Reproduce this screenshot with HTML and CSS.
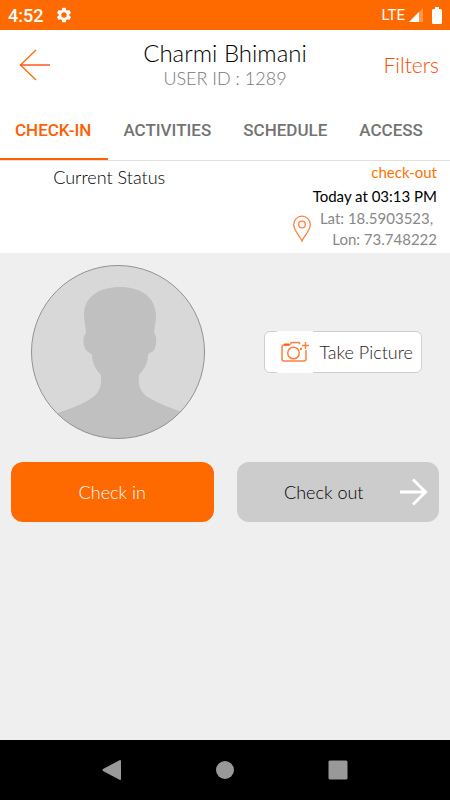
FILE: index.html
```html
<!DOCTYPE html>
<html lang="en">
<head>
<meta charset="utf-8">
<meta name="viewport" content="width=device-width, initial-scale=1">
<title>Check-in</title>
<link rel="stylesheet" href="styles.css">
</head>
<body>
<div class="status-bar">
  <span class="clock">4:52</span>
  <svg class="gear" width="18" height="18" viewBox="0 0 24 24" aria-hidden="true"><path fill="#fff" d="M19.14 12.94c.04-.3.06-.61.06-.94s-.02-.64-.07-.94l2.03-1.58a.49.49 0 0 0 .12-.61l-1.92-3.32a.49.49 0 0 0-.59-.22l-2.39.96a7 7 0 0 0-1.62-.94l-.36-2.54a.48.48 0 0 0-.48-.41h-3.84a.47.47 0 0 0-.47.41l-.36 2.54c-.59.24-1.13.57-1.62.94l-2.39-.96a.48.48 0 0 0-.59.22L2.740 8.870a.47.47 0 0 0 .12.61l2.030 1.580a7 7 0 0 0 0 1.880l-2.030 1.580a.49.49 0 0 0-.12.61l1.920 3.320c.12.22.37.29.59.22l2.390-.96c.5.38 1.030.7 1.620.94l.36 2.540c.05.24.24.41.48.41h3.840c.24 0 .44-.17.47-.41l.36-2.540a7 7 0 0 0 1.620-.94l2.390.96c.22.08.47 0 .59-.22l1.920-3.320a.47.47 0 0 0-.12-.61zM12 15.600a3.600 3.600 0 1 1 0-7.200 3.600 3.600 0 0 1 0 7.200z"/></svg>
  <span class="network">LTE</span>
  <svg class="signal" width="16" height="16" viewBox="0 0 16 16" aria-hidden="true"><path fill="#fff" fill-opacity=".3" d="M15 1v14H1z"/><path fill="#fff" d="M11 5v10H1z"/></svg>
  <svg class="battery" width="10" height="17" viewBox="0 0 10 17" aria-hidden="true"><path fill="#fff" d="M3 0h4v2h1.500a1.500 1.500 0 0 1 1.500 1.500v12A1.500 1.500 0 0 1 8.500 17h-7A1.500 1.500 0 0 1 0 15.500v-12A1.500 1.500 0 0 1 1.500 2H3z"/></svg>
</div>
<header class="header">
  <button class="back" type="button" aria-label="Back">
    <svg width="32" height="32" viewBox="0 0 32 32" fill="none" stroke="#ff6a00" stroke-width="1.300"><path d="M17 1 1.500 16 17 31"/><path stroke="#ff3c00" d="M1.500 16H31"/></svg>
  </button>
  <div class="user">
    <h1 class="name">Charmi Bhimani</h1>
    <p class="user-id">USER ID : 1289</p>
  </div>
  <button class="filters" type="button">Filters</button>
</header>
<nav class="tabs">
  <a class="tab tab-active" href="#checkin">CHECK-IN</a>
  <a class="tab" href="#activities">ACTIVITIES</a>
  <a class="tab" href="#schedule">SCHEDULE</a>
  <a class="tab" href="#access">ACCESS</a>
</nav>
<section class="current" id="checkin">
  <h2 class="current-title">Current Status</h2>
  <div class="details">
    <p class="state">check-out</p>
    <p class="time">Today at 03:13 PM</p>
    <div class="location">
      <svg width="20" height="28" viewBox="0 0 20 28" fill="none" stroke="#ff8243" stroke-width="1.300" aria-hidden="true"><path d="M10 26C7.500 20.500 1.700 15.500 1.700 9.500a8.300 8.300 0 0 1 16.600 0c0 6-5.800 11-8.300 16.500z"/><circle cx="10" cy="9.500" r="3.300"/></svg>
      <p class="coords">Lat: 18.5903523,&nbsp;<br>Lon: 73.748222</p>
    </div>
  </div>
</section>
<main class="main">
  <div class="photo">
    <svg class="avatar" viewBox="0 0 174 174" role="img" aria-label="Profile picture">
      <defs><clipPath id="round"><circle cx="87" cy="87" r="86.500"/></clipPath></defs>
      <circle cx="87" cy="87" r="86.500" fill="#d8d8d8"/>
      <path clip-path="url(#round)" fill="#c0c0c0" d="M89 22C69 22 53 31 53 50C53 57 55 62 55 68C51 71 52 83 56 86C58 88 60 88 61 90C61 99 66 106 70 110C71 124 67 131 54 137C45 142 34 145 24 149V176H151V147C141 143 131 140 122 135C109 129 107 121 108 110C114 103 117 98 117 90C118 87 121 88 123 85C126 80 126 70 123 68C124 60 125 56 125 50C124 31 109 22 89 22Z"/>
      <circle cx="87" cy="87" r="86.500" fill="none" stroke="#929292"/>
    </svg>
  </div>
  <div class="capture">
    <button class="take" type="button">
      <span class="take-icon">
        <svg width="28" height="22" viewBox="0 0 28 22" fill="none" stroke="#ff813d" stroke-width="1.500" aria-hidden="true"><path d="M19 3 18 1.500H10.500L8.500 4H3A2 2 0 0 0 1 6v12a2 2 0 0 0 2 2h20a2 2 0 0 0 2-2V9"/><circle cx="12.500" cy="12" r="5.800"/><path d="M24.500 1v7M21 4.500h7"/><path stroke="#ff5d14" stroke-width="2" d="M3 3.500h5"/><circle cx="20" cy="8" r=".5"/></svg>
      </span>
      <span>Take Picture</span>
    </button>
  </div>
  <button class="action check-in" type="button">Check in</button>
  <button class="action check-out" type="button">
    <span class="action-label">Check out</span>
    <svg width="28" height="28" viewBox="0 0 28 28" fill="none" stroke="#fff" stroke-width="3" aria-hidden="true"><path d="M0 14h26M13 1.500 25.500 14 13 26.500"/></svg>
  </button>
</main>
<footer class="system-nav">
  <button type="button" aria-label="Back"><svg width="20" height="20" viewBox="0 0 20 20"><path fill="#999" d="M18 0q1 0 1 1v18q0 1-1 1L1 11q-1-1 0-2z"/></svg></button>
  <button type="button" aria-label="Home"><svg width="20" height="20" viewBox="0 0 20 20"><circle cx="10" cy="10" r="9" fill="#999"/></svg></button>
  <button type="button" aria-label="Recent apps"><svg width="20" height="20" viewBox="0 0 20 20"><rect x=".5" y=".5" width="19" height="19" rx="1.500" fill="#999"/></svg></button>
</footer>
</body>
</html>
```
FILE: styles.css
```css
* {
  box-sizing: border-box;
}

body {
  margin: 0;
  min-height: 100vh;
  display: flex;
  flex-direction: column;
  background: #efefef;
  color: #000;
  font-family: Lato, "Liberation Sans", sans-serif;
}

h1,
h2,
p {
  margin: 0;
  font-weight: 400;
}

button {
  margin: 0;
  padding: 0;
  border: 0;
  background: none;
  color: inherit;
  font: inherit;
  cursor: pointer;
}

svg {
  display: block;
  flex: none;
}

.status-bar {
  display: flex;
  align-items: center;
  height: 30px;
  padding: 0 8px;
  background: #ff6a00;
  color: #fff;
  font-family: Roboto, sans-serif;
}

.clock {
  font-size: 18px;
  font-weight: 500;
}

.gear {
  margin-left: 12px;
}

.network {
  margin-left: auto;
  font-size: 15px;
}

.signal {
  margin-left: 3px;
}

.battery {
  margin-left: 8px;
}

.header {
  display: grid;
  grid-template-columns: 1fr auto 1fr;
  align-items: center;
  height: 70px;
  padding: 0 11px;
  background: #fff;
}

.back {
  justify-self: start;
  padding-left: 8px;
}

.user {
  padding-bottom: 2px;
  text-align: center;
}

.name {
  font-size: 24px;
  font-weight: 300;
  line-height: 28px;
}

.user-id {
  color: #777;
  font-size: 18px;
  font-weight: 300;
  line-height: 22px;
}

.filters {
  justify-self: end;
  padding-bottom: 2px;
  color: #ff4b00;
  font-size: 21px;
  font-weight: 300;
}

.tabs {
  display: flex;
  height: 61px;
  border-bottom: 1px solid #e0e0e0;
  background: #fff;
  font-family: Roboto, sans-serif;
  font-size: 17px;
  font-weight: 500;
}

.tab {
  display: flex;
  align-items: center;
  height: 60px;
  padding: 2px 17px 0 15px;
  border-bottom: 2px solid transparent;
  color: #737373;
  text-decoration: none;
}

.tab-active {
  border-color: #ff6000;
  color: #ff6000;
}

.current {
  display: grid;
  grid-template-columns: 1fr 1fr;
  min-height: 92px;
  padding: 0 13px 0 0;
  background: #fff;
}

.current-title {
  padding-top: 4px;
  text-align: center;
  font-size: 18px;
  font-weight: 300;
  line-height: 24px;
}

.details {
  text-align: right;
}

.state {
  color: #ff7300;
  font-size: 15px;
  line-height: 23px;
}

.time {
  font-size: 15px;
  line-height: 24px;
}

.location {
  display: flex;
  justify-content: flex-end;
  align-items: center;
  gap: 8px;
}

.coords {
  color: #888;
  font-size: 15px;
  line-height: 21px;
}

.main {
  flex: 1;
  display: grid;
  grid-template-columns: 1fr 1fr;
  align-content: start;
  gap: 23px;
  padding: 12px 11px;
}

.photo {
  display: flex;
  justify-content: center;
  padding-left: 11px;
}

.avatar {
  width: 174px;
  height: 174px;
}

.capture {
  display: flex;
  align-items: center;
  justify-content: center;
  padding-left: 10px;
}

.take {
  display: flex;
  align-items: center;
  gap: 7px;
  height: 42px;
  padding: 0 8px 0 12px;
  border: 1px solid #cfcfcf;
  border-radius: 6px;
  background: #fff;
  color: #2b1717;
  font-size: 18px;
  font-weight: 300;
}

.take-icon {
  display: flex;
  align-items: center;
  height: 42px;
  padding: 0 4px;
  background: #fff;
}

.action {
  display: flex;
  align-items: center;
  justify-content: center;
  height: 60px;
  padding-bottom: 1px;
  border-radius: 12px;
  font-size: 18px;
  font-weight: 300;
}

.check-in {
  background: #ff6a00;
  color: #fff;
}

.check-out {
  padding-right: 11px;
  padding-left: 11px;
  background: #ccc;
}

.action-label {
  flex: 1;
}

.system-nav {
  display: flex;
  justify-content: center;
  align-items: center;
  gap: 93px;
  height: 60px;
  background: #000;
}
```
